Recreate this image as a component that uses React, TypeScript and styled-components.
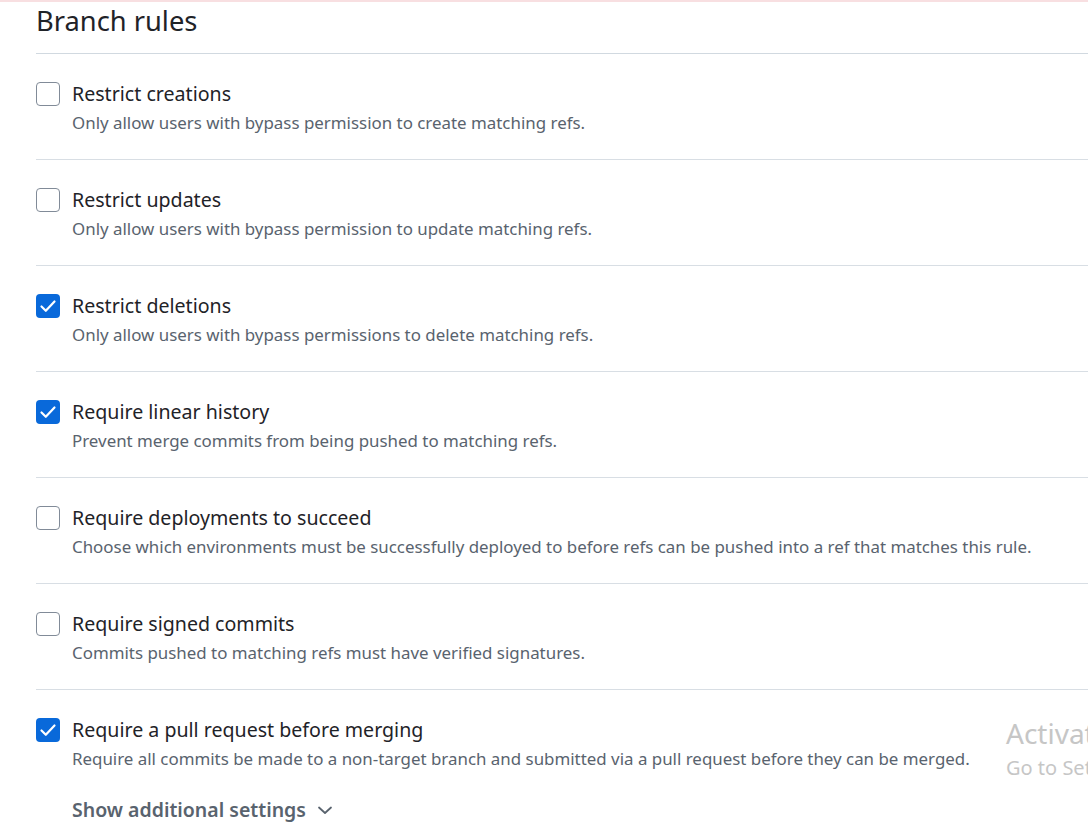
import React from "react";
import styled, { createGlobalStyle } from "styled-components";

const Global = createGlobalStyle`
  html, body { margin: 0; padding: 0; background: #ffffff; }
  body { font-family: "Noto Sans", "Open Sans", sans-serif; color: #1f2328; }
`;

const Page = styled.div`
  position: relative;
  width: 1088px;
  height: 823px;
  overflow: hidden;
  border-top: 2px solid #f8dfe1;
  box-sizing: border-box;
`;

const Content = styled.div`
  padding-left: 36px;
`;

const Title = styled.h2`
  margin: 0;
  font-size: 27.3px;
  font-weight: 400;
  line-height: 38px;
  height: 52px;
  box-sizing: border-box;
  border-bottom: 1px solid #d1d9e0;
`;

const List = styled.div`
  display: flex;
  flex-direction: column;
`;

const Row = styled.div<{ $last?: boolean }>`
  display: grid;
  grid-template-columns: 24px 1fr;
  align-items: start;
  column-gap: 12px;
  padding-top: 28px;
  height: ${(p) => (p.$last ? "auto" : "77px")};
  border-bottom: ${(p) => (p.$last ? "none" : "1px solid #d8dee4")};
`;

const Box = styled.div<{ $checked: boolean }>`
  width: 24px;
  height: 24px;
  box-sizing: border-box;
  border-radius: 4px;
  border: ${(p) => (p.$checked ? "none" : "1px solid #818b98")};
  background: ${(p) => (p.$checked ? "#0969da" : "#ffffff")};
  display: flex;
  align-items: center;
  justify-content: center;
`;

const Texts = styled.div`
  display: flex;
  flex-direction: column;
`;

const Label = styled.div`
  font-size: 19.6px;
  line-height: 24px;
  color: #1f2328;
`;

const Desc = styled.div`
  font-size: 16.9px;
  line-height: 24px;
  color: #59636e;
  margin-top: 5px;
`;

const ShowMore = styled.button`
  display: flex;
  align-items: center;
  gap: 10px;
  margin-top: 27px;
  padding: 0;
  border: none;
  background: none;
  font-family: "Noto Sans", "Open Sans", sans-serif;
  font-size: 19.5px;
  font-weight: 600;
  color: #59636e;
  line-height: 24px;
  cursor: pointer;
`;

const Watermark = styled.div`
  position: absolute;
  left: 1006px;
  top: 713px;
  color: #c6c6c6;
  font-family: "Noto Sans", "Open Sans", sans-serif;
  white-space: nowrap;
`;

const WmTitle = styled.div`
  font-size: 28px;
  line-height: 36px;
`;

const WmSub = styled.div`
  font-size: 20px;
  line-height: 34px;
`;

const Check = () => (
  <svg width="18" height="18" viewBox="0 0 18 18" fill="none">
    <path d="M2.5 9.5 L6.8 13.8 L15.5 4.5" stroke="#ffffff" strokeWidth="2.2" strokeLinecap="round" strokeLinejoin="round" />
  </svg>
);

const Chevron = () => (
  <svg width="18" height="18" viewBox="0 0 18 18" fill="none">
    <path d="M3 6.5 L9 12 L15 6.5" stroke="#59636e" strokeWidth="1.8" strokeLinecap="round" strokeLinejoin="round" />
  </svg>
);

const rules = [
  { label: "Restrict creations", desc: "Only allow users with bypass permission to create matching refs.", checked: false },
  { label: "Restrict updates", desc: "Only allow users with bypass permission to update matching refs.", checked: false },
  { label: "Restrict deletions", desc: "Only allow users with bypass permissions to delete matching refs.", checked: true },
  { label: "Require linear history", desc: "Prevent merge commits from being pushed to matching refs.", checked: true },
  { label: "Require deployments to succeed", desc: "Choose which environments must be successfully deployed to before refs can be pushed into a ref that matches this rule.", checked: false },
  { label: "Require signed commits", desc: "Commits pushed to matching refs must have verified signatures.", checked: false },
  { label: "Require a pull request before merging", desc: "Require all commits be made to a non-target branch and submitted via a pull request before they can be merged.", checked: true },
];

export default function App() {
  return (
    <Page>
      <Global />
      <Content>
        <Title>Branch rules</Title>
        <List>
          {rules.map((r, i) => {
            const last = i === rules.length - 1;
            return (
              <Row key={r.label} $last={last}>
                <Box $checked={r.checked}>{r.checked && <Check />}</Box>
                <Texts>
                  <Label>{r.label}</Label>
                  <Desc>{r.desc}</Desc>
                  {last && (
                    <ShowMore>
                      Show additional settings <Chevron />
                    </ShowMore>
                  )}
                </Texts>
              </Row>
            );
          })}
        </List>
      </Content>
      <Watermark>
        <WmTitle>Activate Windows</WmTitle>
        <WmSub>Go to Settings to activate Windows.</WmSub>
      </Watermark>
    </Page>
  );
}
